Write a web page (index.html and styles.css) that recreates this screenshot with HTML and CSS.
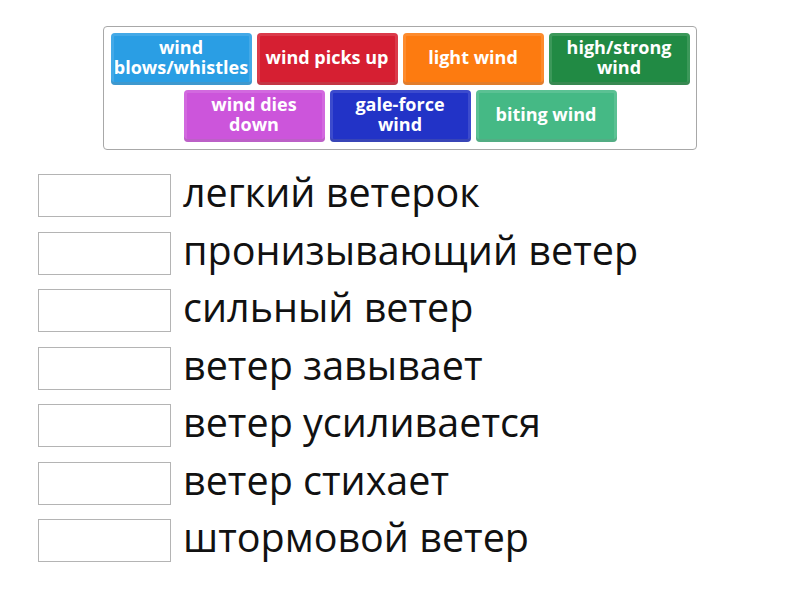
FILE: index.html
```html
<html>

<head>
    <meta charset="utf-8" />
    <link rel="stylesheet" href="styles.css">
</head>

<body>
    <!-- Word bank -->
    <div class="bank">
        <div class="tile blue">wind blows/whistles</div>
        <div class="tile red">wind picks up</div>
        <div class="tile orange">light wind</div>
        <div class="tile green">high/strong wind</div>
        <div class="tile purple">wind dies down</div>
        <div class="tile navy">gale-force wind</div>
        <div class="tile teal">biting wind</div>
    </div>

    <!-- Matching rows -->
    <div class="list">
        <div class="row"><div class="slot"></div><span class="term">легкий ветерок</span></div>
        <div class="row"><div class="slot"></div><span class="term">пронизывающий ветер</span></div>
        <div class="row"><div class="slot"></div><span class="term">сильный ветер</span></div>
        <div class="row"><div class="slot"></div><span class="term">ветер завывает</span></div>
        <div class="row"><div class="slot"></div><span class="term">ветер усиливается</span></div>
        <div class="row"><div class="slot"></div><span class="term">ветер стихает</span></div>
        <div class="row"><div class="slot"></div><span class="term">штормовой ветер</span></div>
    </div>
</body>
</html>
```

FILE: styles.css
```css
body {
    margin: 0;
    background: #ffffff;
    font-family: "Open Sans", "Noto Sans", sans-serif;
}

.bank {
    box-sizing: border-box;
    width: 594px;
    height: 124px;
    margin: 26px 0 0 103px;
    padding: 6px 6px;
    border: 1px solid #a8a8a8;
    border-radius: 4px;
    display: flex;
    flex-wrap: wrap;
    justify-content: center;
    align-content: flex-start;
    gap: 5px 5px;
}

.tile {
    box-sizing: border-box;
    width: 141px;
    height: 52px;
    border-radius: 4px;
    display: flex;
    align-items: center;
    justify-content: center;
    text-align: center;
    color: #ffffff;
    font-weight: 700;
    font-size: 18px;
    line-height: 20px;
    padding: 0 3px 4px;
    box-shadow: inset 0 0 0 3px rgba(255, 255, 255, 0.12), inset 0 -3px 0 rgba(0, 0, 0, 0.12);
}

.blue { background: #2a9ee4; }
.red { background: #d61f32; }
.orange { background: #fd7b10; }
.green { background: #218a44; }
.purple { background: #cc55db; }
.navy { background: #2233c7; }
.teal { background: #45b985; }

.list {
    margin: 24px 0 0 38px;
}

.row {
    display: flex;
    align-items: center;
    height: 43px;
    margin-bottom: 14.5px;
}

.slot {
    box-sizing: border-box;
    width: 133px;
    height: 43px;
    border: 1px solid #b4b4b4;
    background: #ffffff;
    flex-shrink: 0;
}

.term {
    margin: 0 0 7px 12px;
    font-size: 39.5px;
    color: #111111;
    white-space: nowrap;
}
```
